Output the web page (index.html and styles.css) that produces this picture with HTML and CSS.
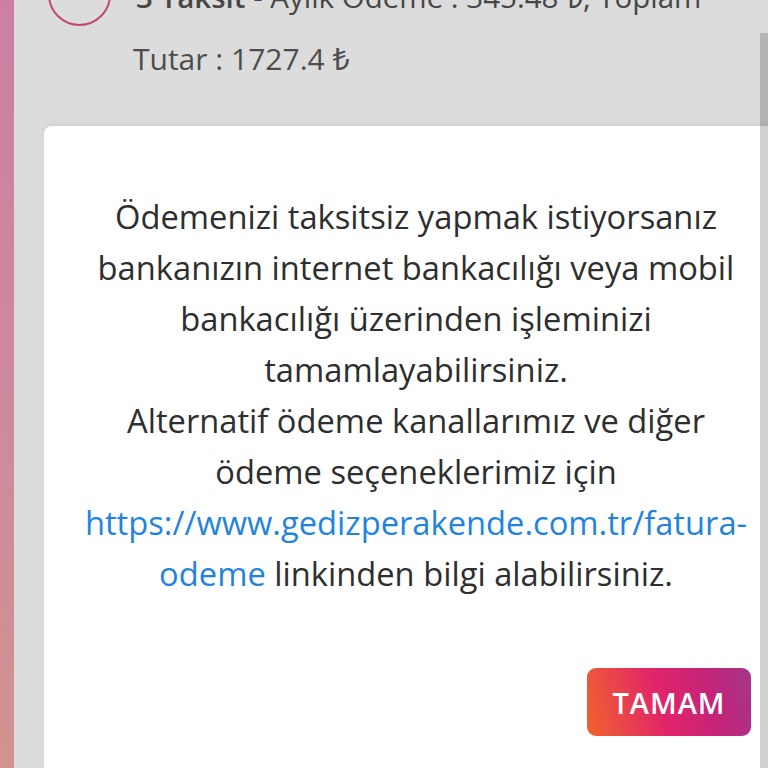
FILE: index.html
```html
<!DOCTYPE html>
<html lang="tr">
<head>
<meta charset="utf-8">
<link rel="stylesheet" href="styles.css">
</head>
<body>
<div class="page">
  <div class="accent"></div>
  <div class="content">
    <div class="card">
      <div class="row">
        <div class="circle"></div>
        <div class="title"><b>3 Taksit</b> - Aylık Ödeme : 345.48 ₺, Toplam</div>
      </div>
      <div class="amount">Tutar : 1727.4 ₺</div>
    </div>
  </div>
</div>
<div class="scrollbar"></div>
<div class="dialog">
  <p class="message">Ödemenizi taksitsiz yapmak istiyorsanız<br>bankanızın internet bankacılığı veya mobil<br>bankacılığı üzerinden işleminizi<br>tamamlayabilirsiniz.<br>Alternatif ödeme kanallarımız ve diğer<br>ödeme seçeneklerimiz için<br><a class="link" href="#">https://www.gedizperakende.com.tr/fatura-<br>odeme</a> linkinden bilgi alabilirsiniz.</p>
  <div class="actions">
    <button class="btn">TAMAM</button>
  </div>
</div>
</body>
</html>
```
FILE: styles.css
```css
html, body {
  margin: 0;
  padding: 0;
  width: 768px;
  height: 768px;
  overflow: hidden;
  background: #dcdcdc;
}
body {
  position: relative;
  font-family: "Open Sans", "Noto Sans", sans-serif;
}
.page {
  display: flex;
  height: 768px;
}
.accent {
  width: 14px;
  flex: none;
  background: linear-gradient(180deg, #cc7fa2 0%, #cf8a9c 60%, #d3938f 100%);
}
.content {
  flex: 1;
  background: #dcdcdc;
}
.card {
  margin-top: -37px;
  padding-left: 34px;
}
.row {
  display: flex;
  align-items: flex-start;
  gap: 25px;
}
.circle {
  width: 59px;
  height: 59px;
  border: 2px solid #c24a68;
  border-radius: 50%;
  flex: none;
}
.title {
  margin-top: 15px;
  font-size: 29.5px;
  line-height: 38px;
  color: #474747;
  white-space: nowrap;
}
.title b {
  font-weight: 600;
}
.amount {
  margin-top: 14px;
  padding-left: 85px;
  font-size: 30px;
  line-height: 38px;
  color: #4d4d4d;
}
.scrollbar {
  position: absolute;
  right: 0;
  top: 33px;
  width: 8px;
  bottom: 0;
  background: rgba(0, 0, 0, 0.18);
  z-index: 3;
}
.dialog {
  position: absolute;
  left: 44px;
  top: 126px;
  width: 744px;
  height: 700px;
  background: #ffffff;
  border-radius: 8px;
  box-shadow: 0 -2px 6px rgba(0, 0, 0, 0.06);
  padding-top: 65px;
  box-sizing: border-box;
  z-index: 2;
}
.message {
  margin: 0;
  font-family: "Open Sans", "Noto Sans", sans-serif;
  font-size: 32.7px;
  line-height: 51px;
  color: #2e2e2e;
  text-align: center;
}
.link {
  color: #1f84e0;
  text-decoration: none;
}
.actions {
  display: flex;
  justify-content: flex-end;
  padding-right: 37px;
  margin-top: 69px;
}
.btn {
  width: 164px;
  height: 68px;
  border: none;
  border-radius: 9px;
  background: linear-gradient(75deg, #f0642c 0%, #e2246a 45%, #c42479 75%, #a4368c 100%);
  color: #ffffff;
  font-family: "Open Sans", sans-serif;
  font-weight: 600;
  font-size: 29px;
  letter-spacing: 1px;
  padding: 0;
}
```
